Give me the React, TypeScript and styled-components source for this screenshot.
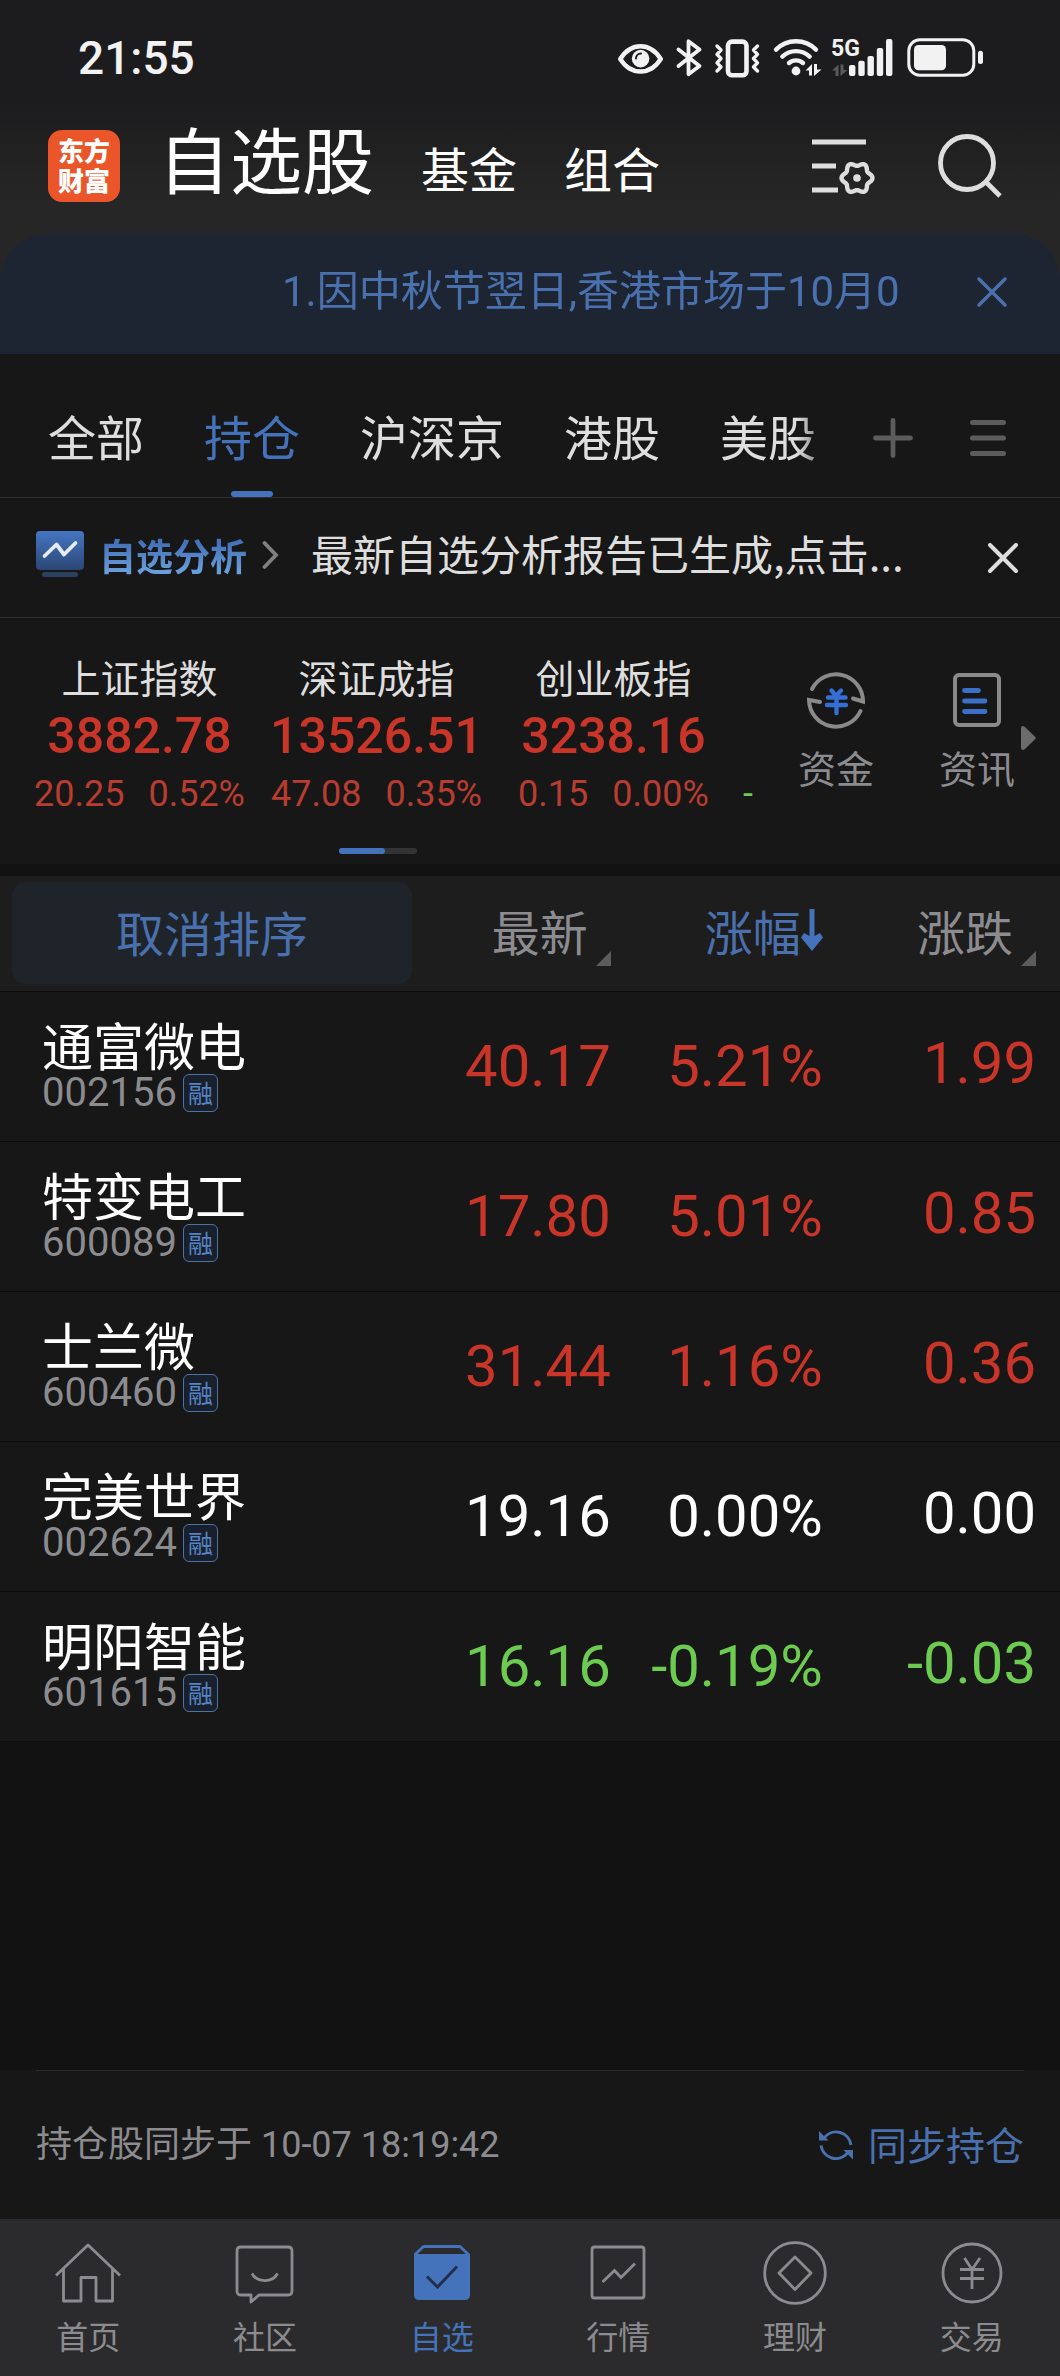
import React from 'react';
import styled, { createGlobalStyle, css } from 'styled-components';

const color = {
  blue: '#4573bb',
  blueDim: '#4a70ae',
  red: '#c93528',
  redSoft: '#b93c31',
  green: '#6ccb50',
  text: '#dedede',
  muted: '#8c8c90',
  faint: '#5c5c5c',
  panel: '#171717',
  page: '#121212',
};

const cjk = "'Noto Sans CJK SC', sans-serif";
const latin = "Roboto, 'Noto Sans CJK SC', sans-serif";

const Global = createGlobalStyle`
  *, *::before, *::after { box-sizing: border-box; }
  body { margin: 0; background: ${color.page}; }
  button {
    margin: 0; padding: 0; border: 0; background: none;
    color: inherit; font: inherit; cursor: pointer;
  }
  a { color: inherit; text-decoration: none; }
  svg { display: block; flex: none; }
`;

const Screen = styled.div`
  display: flex;
  flex-direction: column;
  min-height: 100vh;
  background: ${color.page};
  color: ${color.text};
  font-family: ${cjk};
`;

/* ---------- top ---------- */

const Top = styled.div`
  background: linear-gradient(#1c1c1e 0, #1c1c1e 100px, #262626 200px);
`;

const StatusBar = styled.div`
  display: flex;
  align-items: center;
  justify-content: space-between;
  height: 116px;
  padding: 0 74px 0 78px;
  color: #f2f2f2;
`;

const Clock = styled.time`
  font: 500 46px/1 ${latin};
`;

const StatusIcons = styled.div`
  display: flex;
  gap: 10px;
`;

const Header = styled.header`
  display: flex;
  align-items: center;
  height: 118px;
  padding: 0 56px 18px 48px;
`;

const Logo = styled.a`
  display: flex;
  flex: none;
  align-items: center;
  justify-content: center;
  width: 72px;
  height: 72px;
  margin-right: 38px;
  padding-bottom: 3px;
  border-radius: 14px;
  background: #ea5529;
  color: #fff;
  font: 900 26px/30px ${cjk};
  text-align: center;
`;

const Sections = styled.nav`
  display: flex;
  flex: 1;
  align-items: baseline;
  gap: 47px;
  padding-bottom: 9px;
  white-space: nowrap;
`;

const Section = styled.a<{ $current?: boolean }>`
  color: #fff;
  font-size: ${(p) => (p.$current ? 72 : 48)}px;
  line-height: 84px;
`;

const HeaderActions = styled.div`
  display: flex;
  gap: 61px;
`;

const Notice = styled.div`
  display: flex;
  align-items: center;
  justify-content: space-between;
  height: 120px;
  padding-right: 53px;
  padding-bottom: 4px;
  border-radius: 48px 48px 0 0;
  background: #1d2533;
  color: ${color.blueDim};
`;

const NoticeText = styled.p`
  flex: 1;
  margin: 0 40px 0 0;
  padding-left: 28%;
  overflow: hidden;
  font: 400 42px/64px ${latin};
  white-space: nowrap;
  mask-image: linear-gradient(to right, #000 calc(100% - 36px), transparent);
`;

/* ---------- tabs ---------- */

const TabBar = styled.nav`
  display: flex;
  align-items: stretch;
  height: 144px;
  padding: 0 54px 0 48px;
  border-bottom: 1px solid #2f2f31;
  background: ${color.panel};
`;

const TabList = styled.div`
  display: flex;
  flex: 1;
  gap: 60px;
  overflow: hidden;
  mask-image: linear-gradient(to right, #000 calc(100% - 76px), transparent calc(100% - 30px));
`;

const Tab = styled.button<{ $active?: boolean }>`
  display: flex;
  flex: none;
  flex-direction: column;
  align-items: center;
  justify-content: flex-end;
  gap: 20px;
  color: ${(p) => (p.$active ? color.blue : color.text)};
  font-size: 48px;
  line-height: 72px;
  &::after {
    content: '';
    width: 42px;
    height: 6px;
    border-radius: 3px;
    background: ${(p) => (p.$active ? color.blue : 'transparent')};
  }
`;

const TabTools = styled.div`
  display: flex;
  align-items: center;
  gap: 57px;
  padding-top: 24px;
  color: ${color.faint};
`;

/* ---------- analysis strip ---------- */

const Analysis = styled.section`
  display: flex;
  align-items: center;
  height: 120px;
  padding: 0 42px 0 36px;
  border-bottom: 1px solid #2f2f31;
  background: ${color.panel};
`;

const AnalysisLink = styled.a`
  display: flex;
  align-items: center;
  gap: 15px;
  padding-bottom: 5px;
`;

const AnalysisName = styled.strong`
  background: linear-gradient(#4573bb 30%, #6a9edb 80%);
  background-clip: text;
  color: transparent;
  font-weight: 700;
  font-size: 37px;
  line-height: 56px;
`;

const AnalysisText = styled.p`
  flex: 1;
  margin: 0 32px;
  padding-bottom: 9px;
  overflow: hidden;
  font-size: 42px;
  line-height: 64px;
  white-space: nowrap;
`;

/* ---------- indices ---------- */

const Indices = styled.section`
  display: flex;
  height: 246px;
  padding: 34px 24px 0 21px;
  background: ${color.panel};
`;

const IndexArea = styled.div`
  flex: 1;
  min-width: 0;
`;

const IndexScroll = styled.div`
  display: flex;
  overflow: hidden;
`;

const IndexCard = styled.button`
  display: flex;
  flex: 0 0 237px;
  flex-direction: column;
  align-items: center;
  gap: 4px;
  color: ${color.red};
  font-family: ${latin};
`;

const IndexName = styled.span`
  color: ${color.text};
  font: 400 39px/48px ${cjk};
`;

const IndexValue = styled.span`
  font-weight: 500;
  font-size: 50px;
  line-height: 64px;
`;

const IndexDelta = styled.span`
  display: flex;
  gap: 24px;
  color: ${color.redSoft};
  font-size: 36px;
  line-height: 44px;
`;

const NextIndex = styled.span`
  flex: none;
  align-self: flex-end;
  padding-left: 11px;
  color: ${color.green};
  font: 400 36px/44px ${latin};
`;

const Pager = styled.div`
  width: 78px;
  height: 6px;
  margin: 32px auto 0;
  border-radius: 3px;
  background: #333;
  transform: translateX(-11px);
  &::before {
    content: '';
    display: block;
    width: 60%;
    height: 100%;
    border-radius: 3px;
    background: ${color.blue};
  }
`;

const Shortcuts = styled.div`
  display: flex;
  gap: 61px;
  margin-left: 40px;
  padding-top: 18px;
  color: ${color.muted};
`;

const Shortcut = styled.a`
  display: flex;
  flex-direction: column;
  align-items: center;
  gap: 13px;
  width: 80px;
  font-size: 38px;
  line-height: 48px;
`;

const More = styled.button`
  align-self: flex-start;
  margin-top: 74px;
  margin-left: 4px;
`;

/* ---------- holdings ---------- */

const Holdings = styled.table`
  width: 100%;
  margin-top: 12px;
  border-collapse: collapse;
  table-layout: fixed;
  background: ${color.panel};
`;

const Column = styled.col<{ $share: number }>`
  width: ${(p) => p.$share}%;
`;

const HeadRow = styled.tr`
  height: 115px;
  border-bottom: 1px solid #0c0c0c;
  background: #1d1d1d;
`;

const cell = css<{ $last?: boolean }>`
  padding: 0 ${(p) => (p.$last ? 24 : 4)}px 0 0;
  text-align: right;
  white-space: nowrap;
`;

const HeadCell = styled.th<{ $last?: boolean }>`
  ${cell}
  font-weight: 400;
`;

const ResetCell = styled.th`
  padding: 0 12px;
  font-weight: 400;
`;

const ResetButton = styled.button`
  display: block;
  width: 100%;
  height: 102px;
  padding-bottom: 5px;
  border-radius: 14px;
  background: #1f242b;
  color: ${color.blueDim};
  font-size: 48px;
  line-height: 72px;
`;

const SortButton = styled.button<{ $active?: boolean }>`
  display: inline-flex;
  align-items: ${(p) => (p.$active ? 'center' : 'flex-end')};
  gap: ${(p) => (p.$active ? 0 : 8)}px;
  padding-bottom: 7px;
  color: ${(p) => (p.$active ? color.blueDim : color.muted)};
  font-size: 48px;
  line-height: 72px;
`;

const Row = styled.tr`
  height: 150px;
  border-bottom: 1px solid #0c0c0c;
`;

const NameCell = styled.th`
  padding: 0 0 0 42px;
  font-weight: 400;
  text-align: left;
`;

const StockName = styled.span`
  display: block;
  color: #fff;
  font-size: 51px;
  line-height: 54px;
`;

const StockMeta = styled.span`
  display: flex;
  align-items: center;
  gap: 6px;
  color: ${color.muted};
  font: 400 40px/44px ${latin};
`;

const Badge = styled.span`
  width: 35px;
  height: 38px;
  border: 1px solid #4c73a8;
  border-radius: 6px;
  background: #19202b;
  color: #5583c4;
  font: 400 25px/34px ${cjk};
  text-align: center;
`;

type Trend = 'up' | 'flat' | 'down';
const trendColor: Record<Trend, string> = { up: color.red, flat: '#fff', down: color.green };

const ValueCell = styled.td<{ $trend: Trend; $last?: boolean }>`
  ${cell}
  padding-bottom: ${(p) => (p.$last ? 6 : 0)}px;
  color: ${(p) => trendColor[p.$trend]};
  font: 400 58px/72px ${latin};
`;

/* ---------- footer ---------- */

const SyncBar = styled.section`
  display: flex;
  align-items: center;
  justify-content: space-between;
  height: 149px;
  margin-top: auto;
  padding: 0 36px;
  background: linear-gradient(#2a2a2a, #2a2a2a) center top / calc(100% - 72px) 1px no-repeat ${color.panel};
`;

const SyncTime = styled.p`
  margin: 0;
  color: ${color.muted};
  font: 400 36px/56px ${latin};
`;

const SyncButton = styled.button`
  display: flex;
  align-items: center;
  gap: 15px;
  color: ${color.blueDim};
  font-size: 39px;
  line-height: 56px;
`;

const SyncLabel = styled.span`
  padding-bottom: 4px;
`;

const BottomNav = styled.nav`
  display: grid;
  grid-template-columns: repeat(6, 1fr);
  height: 157px;
  padding-top: 22px;
  background: #2b2b2d;
`;

const NavItem = styled.a<{ $active?: boolean }>`
  display: flex;
  flex-direction: column;
  align-items: center;
  gap: 6px;
  color: ${(p) => (p.$active ? color.blue : color.muted)};
  font-size: 32px;
  line-height: 48px;
`;

/* ---------- drawings ---------- */

const EyeIcon = () => (
  <svg width="48" height="40" viewBox="0 0 48 40" fill="none">
    <path d="M4.2 21C10 12 17 8.3 24.5 8.3S39 12 44.8 21C39 30 32 33.5 24.5 33.5S10 30 4.2 21Z" stroke="currentColor" strokeWidth="4.4" strokeLinejoin="round" />
    <circle cx="24.6" cy="20.6" r="8.8" fill="currentColor" />
    <path d="M20 20.5A5 5 0 0 1 25 15.5" stroke="#1c1c1e" strokeWidth="2" strokeLinecap="round" />
  </svg>
);

const BluetoothIcon = () => (
  <svg width="30" height="40" viewBox="0 0 30 40" fill="none" stroke="currentColor" strokeWidth="3.8" strokeLinejoin="round" strokeLinecap="round">
    <path d="M4.5 11.5 25.5 28 14.5 36.2V3.2L25.5 11.5 4.5 28" />
  </svg>
);

const VibrateIcon = () => (
  <svg width="48" height="40" viewBox="0 0 48 40" fill="none" stroke="currentColor" strokeLinejoin="round" strokeLinecap="round">
    <rect x="14" y="3.6" width="18.5" height="33.6" rx="4" strokeWidth="4.6" />
    <path d="M3 8l4 4-4 4.3 4 4.2-4 4.3 4 4.2-4 4M43.5 8l-4 4 4 4.3-4 4.2 4 4.3-4 4.2 4 4" strokeWidth="3.4" />
  </svg>
);

const WifiIcon = () => (
  <svg width="50" height="40" viewBox="0 0 50 40" fill="none" stroke="currentColor" strokeWidth="4.4" strokeLinecap="round">
    <path d="M4 11.6A28 28 0 0 1 44 11.6M10.3 18.6A20 20 0 0 1 37.7 18.6M17 25A10.5 10.5 0 0 1 31 25" />
    <circle cx="24" cy="33" r="4.4" fill="currentColor" stroke="none" />
    <path d="M33.5 32.5 40 26V37.5H37V32.5ZM42 26h3v5.5h4.5L42 38Z" fill="currentColor" stroke="none" />
  </svg>
);

const SignalLabel = styled.text`
  font: 700 23px ${latin};
`;

const SignalIcon = () => (
  <svg width="64" height="40" viewBox="0 0 64 40" fill="currentColor">
    <SignalLabel x="-1" y="18">5G</SignalLabel>
    <path d="M0 32.5 6.5 26.5V38H3.5V32.5ZM8.5 26.5h3V32H15.500L8.500 38Z" fill="#5a5a5c" />
    <rect x="17" y="27" width="6.400" height="11" rx="2" />
    <rect x="26.300" y="22.700" width="6.400" height="15.300" rx="2" />
    <rect x="35.500" y="18" width="6.400" height="20" rx="2" />
    <rect x="44.800" y="10" width="6.400" height="28" rx="2" />
    <rect x="54" y="1" width="6.400" height="37" rx="2" />
  </svg>
);

const BatteryIcon = () => (
  <svg width="80" height="40" viewBox="0 0 80 40" fill="currentColor">
    <rect x="2.800" y="1.800" width="65" height="35.400" rx="11" fill="none" stroke="currentColor" strokeWidth="3" />
    <rect x="8" y="7" width="32" height="25.300" rx="4.500" />
    <rect x="72" y="12.700" width="5" height="13.300" rx="2.500" />
  </svg>
);

const gearOutline = (cx: number, cy: number) =>
  Array.from({ length: 72 }, (_, i) => {
    const a = (i / 72) * Math.PI * 2;
    const r = 13.8 + 1.7 * Math.cos(6 * a);
    return `${i ? 'L' : 'M'}${(cx + r * Math.cos(a)).toFixed(2)} ${(cy + r * Math.sin(a)).toFixed(2)}`;
  }).join('') + 'Z';

const FilterIcon = () => (
  <svg width="64" height="68" viewBox="0 0 64 68" fill="none" stroke="#dedede">
    <path d="M1 10h54M1 34h24M1 58h26" strokeWidth="4.800" />
    <path d={gearOutline(46, 46)} strokeWidth="4.400" strokeLinejoin="round" />
    <circle cx="46" cy="46" r="3.800" fill="#dedede" stroke="none" />
  </svg>
);

const SearchIcon = () => (
  <svg width="68" height="68" viewBox="0 0 68 68" fill="none" stroke="#dedede" strokeWidth="4.800">
    <circle cx="31" cy="31" r="26.500" />
    <path d="M49.500 49.500 64 64" />
  </svg>
);

const CloseIcon = ({ weight }: { weight: number }) => (
  <svg width="30" height="30" viewBox="0 0 30 30" fill="none" stroke="currentColor" strokeWidth={weight} strokeLinecap="round">
    <path d="M2 2 28 28M28 2 2 28" />
  </svg>
);

const PlusIcon = () => (
  <svg width="40" height="40" viewBox="0 0 40 40" fill="none" stroke="currentColor" strokeWidth="4.800" strokeLinecap="round">
    <path d="M20 2.500v35M2.500 20h35" />
  </svg>
);

const MenuIcon = () => (
  <svg width="36" height="40" viewBox="0 0 36 40" fill="none" stroke="currentColor" strokeWidth="5" strokeLinecap="round">
    <path d="M2.500 4.500h31M2.500 20h31M2.500 35.500h31" />
  </svg>
);

const AnalysisIcon = () => (
  <svg width="48" height="48" viewBox="0 0 48 48" fill="none">
    <defs>
      <linearGradient id="screen" x1="0" y1="0" x2="0" y2="1">
        <stop offset="0" stopColor="#4576c4" />
        <stop offset="1" stopColor="#2c4674" />
      </linearGradient>
    </defs>
    <rect width="48" height="39" rx="4" fill="url(#screen)" />
    <rect x="6" y="41" width="36" height="5" rx="2.500" fill="#2c405f" />
    <path d="M8.500 25 20.500 13.500 28 23.500 39.500 12" stroke="#e6ecf6" strokeWidth="3.800" strokeLinecap="round" strokeLinejoin="round" />
  </svg>
);

const ChevronIcon = () => (
  <svg width="17" height="30" viewBox="0 0 17 30" fill="none" stroke="#808080" strokeWidth="3.800" strokeLinecap="round">
    <path d="M2.500 3 14 15 2.500 27" />
  </svg>
);

const FundsIcon = () => (
  <svg width="60" height="60" viewBox="0 0 60 60" fill="none" strokeLinecap="round" strokeLinejoin="miter">
    <g stroke="#8a8a8a" strokeWidth="4">
      <path d="M6 19A27 27 0 0 1 57 31.500L47 28.500" />
      <path d="M54.500 41A27 27 0 0 1 3 30L14 32" />
    </g>
    <path d="M25.500 20.500 30 26 35 20.500M22 27.500H39.500M21 35H40M30.500 27V43" stroke="#346fd6" strokeWidth="4.400" />
  </svg>
);

const NewsIcon = () => (
  <svg width="60" height="60" viewBox="0 0 60 60" fill="none">
    <rect x="8" y="5" width="44" height="50" rx="4" stroke="#8a8a8a" strokeWidth="4" />
    <path d="M17.500 20.500H31.500M17.500 31H38M17.500 41.500H38" stroke="#3a70ca" strokeWidth="4.800" strokeLinecap="round" />
  </svg>
);

const MoreIcon = () => (
  <svg width="15" height="24" viewBox="0 0 15 24" fill="#6c6c6c">
    <path d="M0 2Q0 0 2 0L4 1 14.300 11Q15 12 14.300 13L4 23 2 24Q0 24 0 22Z" />
  </svg>
);

const CornerIcon = () => (
  <svg width="15" height="15" viewBox="0 0 15 15" fill="#5c5c5e">
    <path d="M15 0V15H0Z" />
  </svg>
);

const DownArrowIcon = () => (
  <svg width="22" height="44" viewBox="0 0 22 44">
    <path d="M8.500 1h5v27l5.500-3 3 4.500L11 43 0 29.500 3 25l5.500 3Z" fill={color.blue} />
  </svg>
);

const SyncIcon = () => (
  <svg width="34" height="34" viewBox="0 0 34 34" fill="none" stroke={color.blueDim} strokeWidth="3">
    <path d="M5.500 9.500A15 15 0 0 1 32 17M2 17.500A15 15 0 0 0 28.500 25" />
    <path d="M0 3V12.500H9.500ZM34 31.500V22H24.500Z" fill={color.blueDim} stroke="none" />
  </svg>
);

const HomeIcon = () => (
  <svg width="66" height="64" viewBox="0 0 66 64" fill="none" stroke="currentColor" strokeWidth="2.800" strokeLinejoin="round">
    <path d="M1 34.500 33 4 65 34.500M8.500 28V60H26V36.500H41V60H57.500V28" />
  </svg>
);

const CommunityIcon = () => (
  <svg width="64" height="64" viewBox="0 0 64 64" fill="none" stroke="currentColor" strokeWidth="2.800" strokeLinejoin="round">
    <path d="M8 6H55Q59 6 59 10V50Q59 54 55 54H26L18 61V54H8Q4 54 4 50V10Q4 6 8 6Z" />
    <path d="M19 32.500A14 12 0 0 0 44.500 32.500" />
  </svg>
);

const WatchlistIcon = () => (
  <svg width="64" height="64" viewBox="0 0 64 64" fill="none">
    <path d="M5 13.500 13.500 5.500H50L58.500 13.500" stroke="currentColor" strokeWidth="3" strokeLinejoin="round" />
    <path d="M4 13H60V54Q60 59 55 59H9Q4 59 4 54Z" fill="currentColor" />
    <path d="M17 35.500 27.500 46 47 25.500" stroke="#20304c" strokeWidth="3" />
  </svg>
);

const QuotesIcon = () => (
  <svg width="64" height="64" viewBox="0 0 64 64" fill="none" stroke="currentColor" strokeWidth="2.800">
    <rect x="6" y="6" width="52" height="51" rx="2.500" />
    <path d="M16.500 41 28.500 29.500 35 36.500 49 22.500" />
  </svg>
);

const WealthIcon = () => (
  <svg width="64" height="64" viewBox="0 0 64 64" fill="none" stroke="currentColor" strokeWidth="2.800" strokeLinejoin="round">
    <circle cx="32" cy="32" r="30.300" />
    <path d="M32 16 48 32 32 48.500 16 32Z" />
  </svg>
);

const TradeIcon = () => (
  <svg width="64" height="64" viewBox="0 0 64 64" fill="none" stroke="currentColor" strokeWidth="2.800">
    <circle cx="32" cy="32" r="29" />
    <path d="M24.500 17 32 28.500 40 17M20 28.500H44M20 37.500H44M32 28.500V48" />
  </svg>
);

/* ---------- data ---------- */

const tabs = ['全部', '持仓', '沪深京', '港股', '美股'];

const indices = [
  { name: '上证指数', value: '3882.78', change: '20.25', rate: '0.52%' },
  { name: '深证成指', value: '13526.51', change: '47.08', rate: '0.35%' },
  { name: '创业板指', value: '3238.16', change: '0.15', rate: '0.00%' },
];

const stocks: { name: string; code: string; price: string; rate: string; change: string; trend: Trend }[] = [
  { name: '通富微电', code: '002156', price: '40.17', rate: '5.21%', change: '1.99', trend: 'up' },
  { name: '特变电工', code: '600089', price: '17.80', rate: '5.01%', change: '0.85', trend: 'up' },
  { name: '士兰微', code: '600460', price: '31.44', rate: '1.16%', change: '0.36', trend: 'up' },
  { name: '完美世界', code: '002624', price: '19.16', rate: '0.00%', change: '0.00', trend: 'flat' },
  { name: '明阳智能', code: '601615', price: '16.16', rate: '-0.19%', change: '-0.03', trend: 'down' },
];

const navItems = [
  { label: '首页', Icon: HomeIcon },
  { label: '社区', Icon: CommunityIcon },
  { label: '自选', Icon: WatchlistIcon },
  { label: '行情', Icon: QuotesIcon },
  { label: '理财', Icon: WealthIcon },
  { label: '交易', Icon: TradeIcon },
];

export default function App() {
  return (
    <Screen>
      <Global />
      <Top>
        <StatusBar>
          <Clock>21:55</Clock>
          <StatusIcons>
            <EyeIcon />
            <BluetoothIcon />
            <VibrateIcon />
            <WifiIcon />
            <SignalIcon />
            <BatteryIcon />
          </StatusIcons>
        </StatusBar>
        <Header>
          <Logo href="#">东方<br />财富</Logo>
          <Sections>
            <Section href="#" $current>自选股</Section>
            <Section href="#">基金</Section>
            <Section href="#">组合</Section>
          </Sections>
          <HeaderActions>
            <button aria-label="列表设置"><FilterIcon /></button>
            <button aria-label="搜索"><SearchIcon /></button>
          </HeaderActions>
        </Header>
        <Notice>
          <NoticeText>1.因中秋节翌日,香港市场于10月0</NoticeText>
          <button aria-label="关闭公告"><CloseIcon weight={3.4} /></button>
        </Notice>
      </Top>

      <TabBar>
        <TabList>
          {tabs.map((t) => (
            <Tab key={t} $active={t === '持仓'}>{t}</Tab>
          ))}
        </TabList>
        <TabTools>
          <button aria-label="添加分组"><PlusIcon /></button>
          <button aria-label="分组管理"><MenuIcon /></button>
        </TabTools>
      </TabBar>

      <Analysis>
        <AnalysisLink href="#">
          <AnalysisIcon />
          <AnalysisName>自选分析</AnalysisName>
          <ChevronIcon />
        </AnalysisLink>
        <AnalysisText>最新自选分析报告已生成,点击...</AnalysisText>
        <button aria-label="关闭分析"><CloseIcon weight={4} /></button>
      </Analysis>

      <Indices>
        <IndexArea>
          <IndexScroll>
            {indices.map((x) => (
              <IndexCard key={x.name}>
                <IndexName>{x.name}</IndexName>
                <IndexValue>{x.value}</IndexValue>
                <IndexDelta>
                  <span>{x.change}</span>
                  <span>{x.rate}</span>
                </IndexDelta>
              </IndexCard>
            ))}
            <NextIndex>-</NextIndex>
          </IndexScroll>
          <Pager />
        </IndexArea>
        <Shortcuts>
          <Shortcut href="#"><FundsIcon />资金</Shortcut>
          <Shortcut href="#"><NewsIcon />资讯</Shortcut>
        </Shortcuts>
        <More aria-label="更多"><MoreIcon /></More>
      </Indices>

      <Holdings>
        <colgroup>
          <Column $share={40} />
          <Column $share={18} />
          <Column $share={20} />
          <Column $share={22} />
        </colgroup>
        <thead>
          <HeadRow>
            <ResetCell scope="col"><ResetButton>取消排序</ResetButton></ResetCell>
            <HeadCell scope="col"><SortButton>最新<CornerIcon /></SortButton></HeadCell>
            <HeadCell scope="col"><SortButton $active>涨幅<DownArrowIcon /></SortButton></HeadCell>
            <HeadCell scope="col" $last><SortButton>涨跌<CornerIcon /></SortButton></HeadCell>
          </HeadRow>
        </thead>
        <tbody>
          {stocks.map((s) => (
            <Row key={s.code}>
              <NameCell scope="row">
                <StockName>{s.name}</StockName>
                <StockMeta>{s.code}<Badge>融</Badge></StockMeta>
              </NameCell>
              <ValueCell $trend={s.trend}>{s.price}</ValueCell>
              <ValueCell $trend={s.trend}>{s.rate}</ValueCell>
              <ValueCell $trend={s.trend} $last>{s.change}</ValueCell>
            </Row>
          ))}
        </tbody>
      </Holdings>

      <SyncBar>
        <SyncTime>持仓股同步于 10-07 18:19:42</SyncTime>
        <SyncButton><SyncIcon /><SyncLabel>同步持仓</SyncLabel></SyncButton>
      </SyncBar>

      <BottomNav>
        {navItems.map(({ label, Icon }) => (
          <NavItem key={label} href="#" $active={label === '自选'}>
            <Icon />
            {label}
          </NavItem>
        ))}
      </BottomNav>
    </Screen>
  );
}
